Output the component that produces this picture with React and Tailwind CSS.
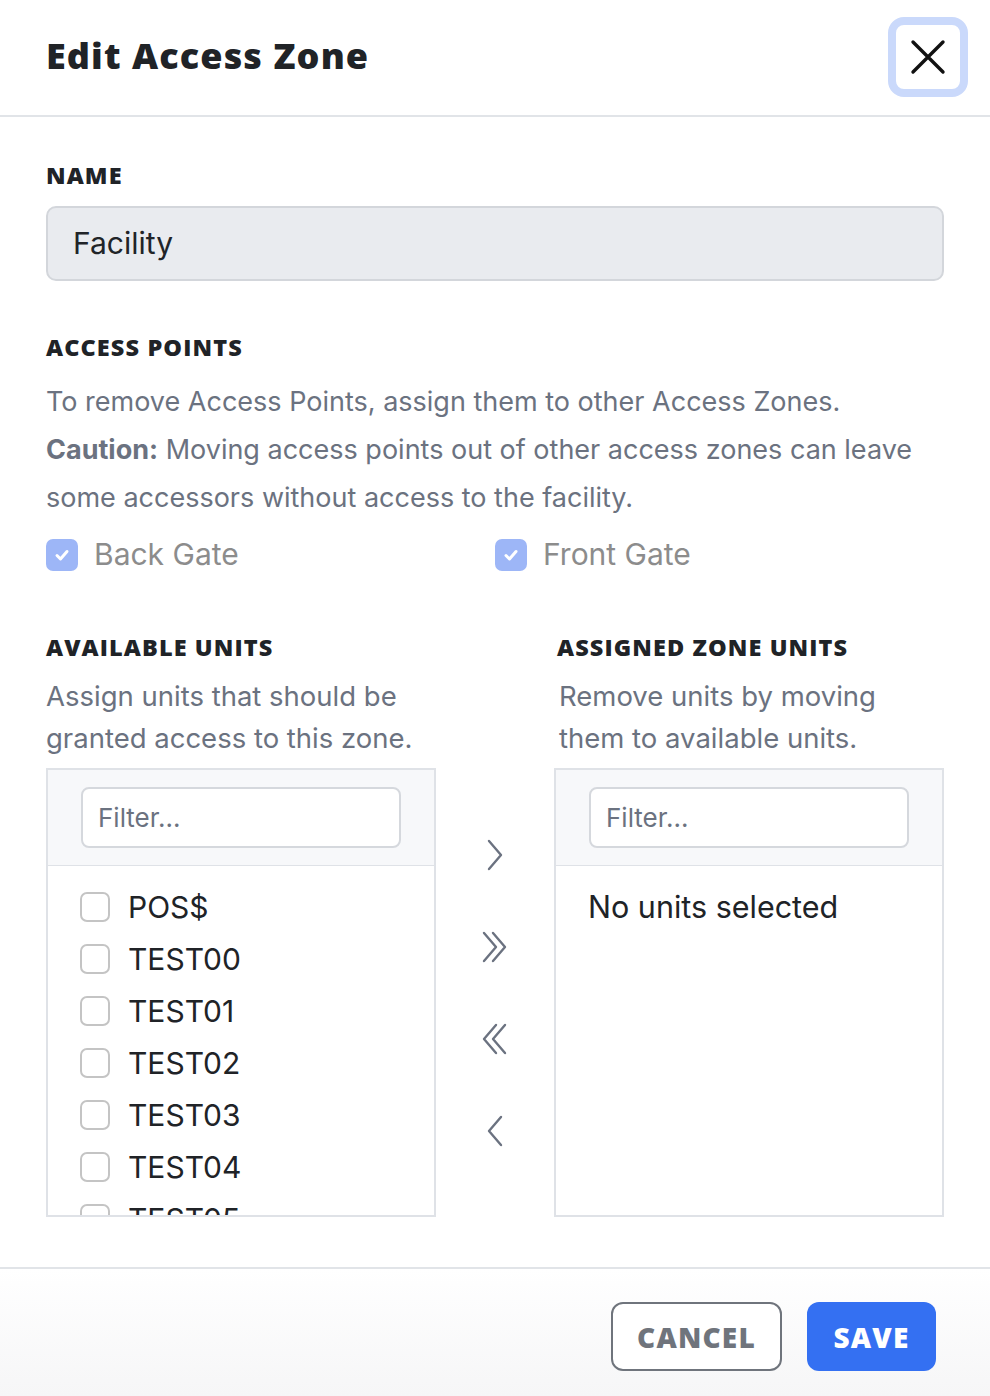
import React from "react";

const HEAD = { fontFamily: '"Open Sans", "DejaVu Sans", sans-serif' };
const BODY = { fontFamily: 'Inter, "Noto Sans", sans-serif' };

function Chevron({ dir = "right", double = false }) {
  const single = (dx) =>
    dir === "right"
      ? `M${4 + dx} 2 L${16 + dx} 16 L${4 + dx} 30`
      : `M${16 + dx} 2 L${4 + dx} 16 L${16 + dx} 30`;
  return (
    <svg width="30" height="32" viewBox="0 0 30 32" fill="none" stroke="#6b7280" strokeWidth="2.4" strokeLinecap="round" strokeLinejoin="round">
      {double ? (
        <>
          <path d={single(dir === "right" ? 0 : 9)} />
          <path d={single(dir === "right" ? 9 : 0)} />
        </>
      ) : (
        <path d={single(5)} />
      )}
    </svg>
  );
}

function Box() {
  return <span className="w-[30px] h-[30px] rounded-[7px] border-2 border-[#c4c4c4] bg-white shrink-0" />;
}

function Checked() {
  return (
    <span className="w-[32px] h-[32px] rounded-[7px] bg-[#9db6f7] flex items-center justify-center shrink-0">
      <svg width="18" height="18" viewBox="0 0 18 18" fill="none" stroke="white" strokeWidth="3" strokeLinecap="round" strokeLinejoin="round">
        <path d="M4 9.5 L7.5 13 L14 5.5" />
      </svg>
    </span>
  );
}

function FilterBox() {
  return (
    <div className="bg-[#f7f8fa] border-b border-[#dfe2e7] px-[33px] pt-[17px] pb-[17px]">
      <div className="h-[61px] bg-white border-2 border-[#d5d8dd] rounded-[8px] flex items-center pl-[15px]">
        <span className="text-[26px] text-[#6b7280]" style={BODY}>Filter...</span>
      </div>
    </div>
  );
}

function Label({ children, className = "" }) {
  return (
    <div className={`text-[23.5px] leading-[28px] font-extrabold text-[#202327] tracking-[1.1px] ${className}`} style={HEAD}>
      {children}
    </div>
  );
}

export default function App() {
  const units = ["POS$", "TEST00", "TEST01", "TEST02", "TEST03", "TEST04", "TEST05"];
  return (
    <div className="w-[990px] h-[1396px] bg-white flex flex-col overflow-hidden" style={BODY}>
      {/* Header */}
      <div className="h-[117px] border-b-2 border-[#e1e4e8] flex items-center justify-between pl-[46px] pr-[22px] shrink-0">
        <h1 className="text-[36px] font-extrabold text-[#202327] tracking-[1.1px] -mt-[3px]" style={HEAD}>Edit Access Zone</h1>
        <div className="w-[80px] h-[80px] rounded-[16px] border-[8px] border-[#cad9fb] bg-white flex items-center justify-center -mt-[2px]">
          <svg width="36" height="36" viewBox="0 0 36 36" fill="none" stroke="#111" strokeWidth="3.4" strokeLinecap="round">
            <path d="M3 3 L33 33 M33 3 L3 33" />
          </svg>
        </div>
      </div>

      {/* Body */}
      <div className="flex-1 px-[46px] pt-[44px]">
        <Label>NAME</Label>
        <div className="mt-[17px] h-[75px] rounded-[10px] bg-[#e9ebef] border-2 border-[#d3d6db] flex items-center pl-[25px]">
          <span className="text-[30px] text-[#212428]">Facility</span>
        </div>

        <Label className="mt-[52px]">ACCESS POINTS</Label>
        <p className="mt-[17px] text-[27px] leading-[48px] text-[#6b7280]">
          To remove Access Points, assign them to other Access Zones.
          <br />
          <span className="font-bold">Caution:</span> Moving access points out of other access zones can leave some accessors without access to the facility.
        </p>
        <div className="mt-[10px] grid grid-cols-2 h-[40px] items-center">
          <div className="flex items-center gap-[16px]">
            <Checked />
            <span className="text-[30px] text-[#8c8c8c]">Back Gate</span>
          </div>
          <div className="flex items-center gap-[16px]">
            <Checked />
            <span className="text-[30px] text-[#8c8c8c]">Front Gate</span>
          </div>
        </div>

        <div className="mt-[61px] grid grid-cols-[390px_118px_390px]">
          <div>
            <Label>AVAILABLE UNITS</Label>
            <p className="mt-[14px] text-[27.5px] leading-[42px] text-[#6b7280]">
              Assign units that should be
              <br />
              granted access to this zone.
            </p>
          </div>
          <div />
          <div>
            <Label className="pl-[3px]">ASSIGNED ZONE UNITS</Label>
            <p className="pl-[5px] mt-[14px] text-[27.5px] leading-[42px] text-[#6b7280]">
              Remove units by moving
              <br />
              them to available units.
            </p>
          </div>

          {/* Left panel */}
          <div className="mt-[9px] h-[449px] border-2 border-[#dfe2e7] flex flex-col overflow-hidden">
            <FilterBox />
            <div className="flex-1 overflow-hidden pt-[15px] pl-[32px]">
              {units.map((u) => (
                <div key={u} className="h-[52px] flex items-center gap-[18px]">
                  <Box />
                  <span className="text-[30px] text-[#202327]">{u}</span>
                </div>
              ))}
            </div>
          </div>

          {/* Middle arrows */}
          <div className="mt-[9px] flex flex-col items-center pt-[71px] gap-[60px]">
            <Chevron dir="right" />
            <Chevron dir="right" double />
            <Chevron dir="left" double />
            <Chevron dir="left" />
          </div>

          {/* Right panel */}
          <div className="mt-[9px] h-[449px] border-2 border-[#dfe2e7] flex flex-col overflow-hidden">
            <FilterBox />
            <div className="flex-1 pt-[15px] pl-[32px]">
              <div className="h-[52px] flex items-center">
                <span className="text-[30.5px] text-[#202327]">No units selected</span>
              </div>
            </div>
          </div>
        </div>
      </div>

      {/* Footer */}
      <div className="h-[129px] border-t-2 border-[#e1e4e8] bg-gradient-to-b from-white to-[#f6f6f7] flex items-start justify-end gap-[25px] pt-[33px] pr-[54px] shrink-0">
        <button className="h-[69px] w-[171px] rounded-[12px] border-2 border-[#6f747c] bg-white text-[28px] font-extrabold tracking-[1.2px] text-[#6f747c]" style={HEAD}>CANCEL</button>
        <button className="h-[69px] w-[129px] rounded-[12px] bg-[#3470f2] text-[28px] font-extrabold tracking-[1.2px] text-white" style={HEAD}>SAVE</button>
      </div>
    </div>
  );
}
